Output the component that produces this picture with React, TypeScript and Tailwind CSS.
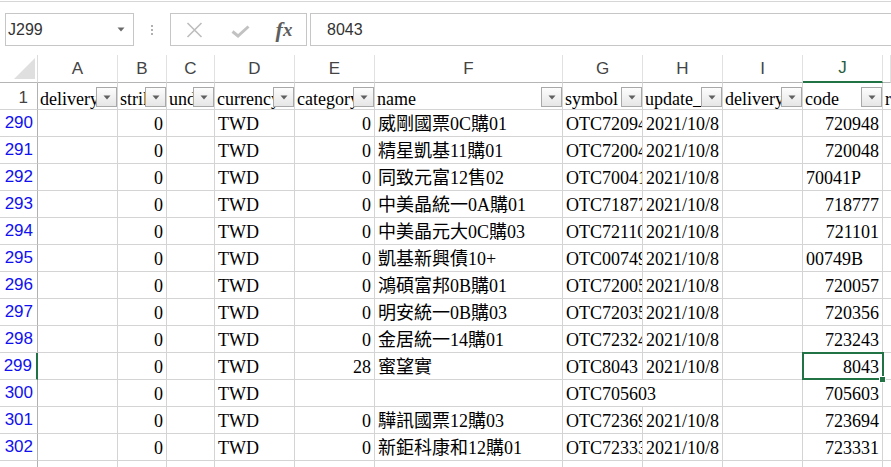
import React from 'react';

type Row = {
  n: string;
  b: string;
  d: string;
  e: string;
  f: string;
  g: string;
  h: string;
  j: string;
  jText?: boolean;
  spanG?: boolean;
};

const rows: Row[] = [
  { n: '290', b: '0', d: 'TWD', e: '0', f: '威剛國票0C購01', g: 'OTC720948', h: '2021/10/8', j: '720948' },
  { n: '291', b: '0', d: 'TWD', e: '0', f: '精星凱基11購01', g: 'OTC720048', h: '2021/10/8', j: '720048' },
  { n: '292', b: '0', d: 'TWD', e: '0', f: '同致元富12售02', g: 'OTC70041P', h: '2021/10/8', j: '70041P', jText: true },
  { n: '293', b: '0', d: 'TWD', e: '0', f: '中美晶統一0A購01', g: 'OTC718777', h: '2021/10/8', j: '718777' },
  { n: '294', b: '0', d: 'TWD', e: '0', f: '中美晶元大0C購03', g: 'OTC721101', h: '2021/10/8', j: '721101' },
  { n: '295', b: '0', d: 'TWD', e: '0', f: '凱基新興債10+', g: 'OTC00749B', h: '2021/10/8', j: '00749B', jText: true },
  { n: '296', b: '0', d: 'TWD', e: '0', f: '鴻碩富邦0B購01', g: 'OTC720057', h: '2021/10/8', j: '720057' },
  { n: '297', b: '0', d: 'TWD', e: '0', f: '明安統一0B購03', g: 'OTC720356', h: '2021/10/8', j: '720356' },
  { n: '298', b: '0', d: 'TWD', e: '0', f: '金居統一14購01', g: 'OTC723243', h: '2021/10/8', j: '723243' },
  { n: '299', b: '0', d: 'TWD', e: '28', f: '蜜望實', g: 'OTC8043', h: '2021/10/8', j: '8043' },
  { n: '300', b: '0', d: 'TWD', e: '', f: '', g: 'OTC705603', h: '', j: '705603', spanG: true },
  { n: '301', b: '0', d: 'TWD', e: '0', f: '驊訊國票12購03', g: 'OTC723694', h: '2021/10/8', j: '723694' },
  { n: '302', b: '0', d: 'TWD', e: '0', f: '新鉅科康和12購01', g: 'OTC723331', h: '2021/10/8', j: '723331' },
  { n: '303', b: '', d: '', e: '', f: '', g: '', h: '', j: '' },
];

const GRID =
  'grid grid-cols-[38px_80px_49px_48px_80px_80px_188px_80px_80px_80px_80px_1fr]';

const cellBase =
  'border-r border-b border-[#d4d4d4] overflow-hidden whitespace-nowrap flex items-center px-[3px] pt-[1px] leading-[18px]';

function Cell({ v, right, extra = '' }: { v: string; right?: boolean; extra?: string }) {
  return <div className={`${cellBase} ${right ? 'justify-end' : 'justify-start'} ${extra}`}>{v}</div>;
}

function FilterBtn() {
  return (
    <span className="absolute right-0 top-[4px] w-[21px] h-[20px] border border-[#a9a9a9] bg-linear-to-b from-[#fdfdfd] to-[#e6e6e6] flex items-center justify-center">
      <svg width="8" height="5" viewBox="0 0 8 5">
        <path d="M0.5 0.5h7L4 4.5z" fill="#5f5f5f" />
      </svg>
    </span>
  );
}

function HeadCell({ v, extra = '' }: { v: string; extra?: string }) {
  return (
    <div
      className={`relative border-r border-b border-[#d4d4d4] overflow-hidden whitespace-nowrap flex items-end px-[2px] pb-[2px] leading-[16px] ${extra}`}
    >
      {v}
      <FilterBtn />
    </div>
  );
}

export default function App() {
  const letters = ['A', 'B', 'C', 'D', 'E', 'F', 'G', 'H', 'I', 'J', ''];
  return (
    <div className="w-[891px] h-[467px] overflow-hidden bg-white text-black">
      {/* formula bar area */}
      <div className="h-[55px] flex flex-col">
        <div className="mt-[1px] h-[1px] bg-[#d6d6d6]" />
        <div className="mt-[11px] flex items-start h-[33px]">
          <div className="ml-[5px] w-[129px] h-[33px] border border-[#c6c6c6] flex items-center pl-[2px] pr-[8px] font-['Liberation_Sans',sans-serif] text-[16px] text-[#333]">
            <span className="flex-1">J299</span>
            <svg width="8" height="5" viewBox="0 0 8 5">
              <path d="M0.5 0.5h7L4 4.5z" fill="#6a6a6a" />
            </svg>
          </div>
          <div className="w-[36px] h-[33px] flex items-center justify-center">
            <svg width="4" height="10" viewBox="0 0 4 10">
              <rect x="1" y="0" width="2" height="2" fill="#b0b0b0" />
              <rect x="1" y="4" width="2" height="2" fill="#b0b0b0" />
              <rect x="1" y="8" width="2" height="2" fill="#b0b0b0" />
            </svg>
          </div>
          <div className="w-[137px] h-[33px] border border-[#c6c6c6] flex items-center">
            <div className="w-[46px] flex items-center justify-center">
              <svg width="17" height="16" viewBox="0 0 17 16">
                <path d="M1.5 1 L15.5 15 M15.5 1 L1.5 15" stroke="#bdbdbd" strokeWidth="1.6" fill="none" />
              </svg>
            </div>
            <div className="w-[46px] flex items-center justify-center pt-[3px]">
              <svg width="19" height="13" viewBox="0 0 19 13">
                <path d="M1.5 6.5 L7 11 L17.5 1.5" stroke="#c2c2c2" strokeWidth="3" fill="none" strokeLinejoin="miter" />
              </svg>
            </div>
            <div className="flex-1 flex items-center justify-center font-['Liberation_Serif',serif] italic font-bold text-[22px] leading-none text-[#5e5e5e] pr-[1px]">
              <span>f</span>
              <span className="text-[19px]">x</span>
            </div>
          </div>
          <div className="ml-[3px] flex-1 h-[33px] border-y border-l border-[#c6c6c6] flex items-center pl-[16px] font-['Liberation_Sans',sans-serif] text-[16px] text-[#333]">
            8043
          </div>
        </div>
      </div>

      {/* column header row */}
      <div className={`${GRID} h-[28px] font-['Liberation_Sans',sans-serif] text-[17px] text-[#444]`}>
        <div className="border-r border-b border-r-[#dcdcdc] border-b-[#b5b5b5] relative">
          <svg className="absolute left-0 top-0" width="37" height="27" viewBox="0 0 37 27">
            <polygon points="35,3 35,24 14,24" fill="#dfdfdf" />
          </svg>
        </div>
        {letters.map((l, i) => (
          <div
            key={i}
            className={`flex items-center justify-center border-r border-r-[#e1e1e1] ${
              l === 'J' ? 'border-b-2 border-b-[#217346] text-[#2a5d40]' : 'border-b border-b-[#b5b5b5]'
            }`}
          >
            {l}
          </div>
        ))}
      </div>

      {/* body */}
      <div className="font-['Liberation_Serif','Noto_Sans_CJK_TC',serif] text-[18px]">
        {/* row 1 */}
        <div className={`${GRID} h-[27px]`}>
          <div className="border-r border-b border-r-[#b1b1b1] border-b-[#d4d4d4] flex items-end justify-end pr-[9px] pb-[3px] leading-[16px] font-['Liberation_Sans',sans-serif] text-[17px] text-[#444]">
            1
          </div>
          <HeadCell v="delivery_date" />
          <HeadCell v="strike" />
          <HeadCell v="underlying" />
          <HeadCell v="currency" />
          <HeadCell v="category" />
          <HeadCell v="name" />
          <HeadCell v="symbol" />
          <HeadCell v="update_date" />
          <HeadCell v="delivery_month" />
          <HeadCell v="code" />
          <div className="border-b border-[#d4d4d4] overflow-hidden whitespace-nowrap flex items-end px-[2px] pb-[2px] leading-[16px]">
            reference
          </div>
        </div>

        {rows.map((r) => {
          const sel = r.n === '299';
          return (
            <div key={r.n} className={`${GRID} h-[27px]`}>
              <div
                className={`border-b border-b-[#d4d4d4] flex items-center justify-end pr-[4px] leading-[18px] font-['Liberation_Sans',sans-serif] text-[17px] text-[#1010f0] ${
                  sel ? 'border-r-2 border-r-[#217346]' : 'border-r border-r-[#b1b1b1]'
                }`}
              >
                {r.n}
              </div>
              <Cell v="" />
              <Cell v={r.b} right />
              <Cell v="" />
              <Cell v={r.d} />
              <Cell v={r.e} right />
              <Cell v={r.f} />
              {r.spanG ? (
                <Cell v={r.g} extra="col-span-2" />
              ) : (
                <>
                  <Cell v={r.g} />
                  <Cell v={r.h} />
                </>
              )}
              <Cell v="" />
              {sel ? (
                <div className="relative border-r border-b border-[#d4d4d4] whitespace-nowrap flex items-center justify-end px-[3px] pt-[1px] leading-[18px]">
                  {r.j}
                  <span className="absolute z-10 -left-[1px] -top-[1px] w-[82px] h-[28px] border-2 border-[#217346]" />
                  <span className="absolute z-20 left-[76px] top-[23px] w-[7px] h-[7px] bg-[#217346] border border-white" />
                </div>
              ) : (
                <Cell v={r.j} right={!r.jText} />
              )}
              <div className="border-b border-[#d4d4d4]" />
            </div>
          );
        })}
      </div>
    </div>
  );
}
